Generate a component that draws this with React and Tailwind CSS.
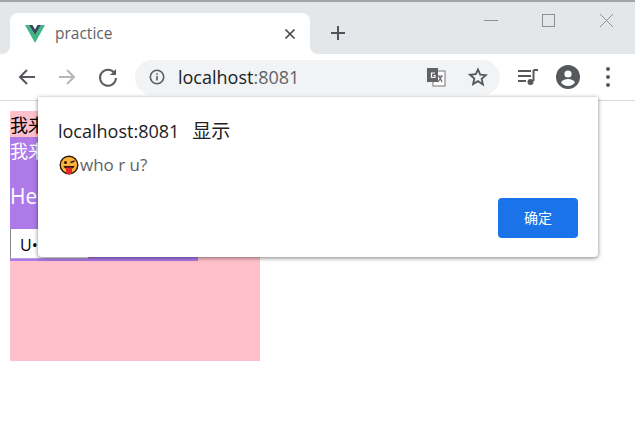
const font = { fontFamily: '"Open Sans", "Noto Sans CJK SC", sans-serif' };

const TabIcon = () => (
  <svg width="20" height="18" viewBox="0 0 20 18">
    <path d="M0 0h4l6 10 6-10h4L10 18z" fill="#41b883" />
    <path d="M4 0h3.5L10 4.5 12.5 0H16l-6 10z" fill="#35495e" />
  </svg>
);

const ToolIcon = ({ children, className = '' }) => (
  <svg width="24" height="24" viewBox="0 0 24 24" className={className} fill="none">
    {children}
  </svg>
);

const Translate = () => (
  <svg width="20" height="20" viewBox="0 0 20 20">
    <rect x="7" y="4" width="12" height="15" fill="#fff" stroke="#777" strokeWidth="1" />
    <path d="M10 9h7M13 9l3 6M16 9l-4 6" stroke="#666" strokeWidth="1.2" fill="none" />
    <rect x="1" y="1" width="11" height="14" fill="#5f6368" />
    <path d="M9 6H5.500v4.500H9V8.500H7.400" stroke="#fff" strokeWidth="1.2" fill="none" />
  </svg>
);

const Emoji = () => (
  <svg width="20" height="20" viewBox="0 0 20 20" className="shrink-0 ml-[1px] mr-[1px]">
    <circle cx="10" cy="10" r="8.8" fill="#fbb13a" stroke="#2c1a05" strokeWidth="1.4" />
    <circle cx="6.5" cy="7.5" r="1.5" fill="#2c1a05" />
    <path d="M11.5 7.5l4-1.5" stroke="#2c1a05" strokeWidth="1.5" />
    <path d="M4.5 11h11c-.5 2-2 3-5.500 3s-5-1-5.500-3z" fill="#2c1a05" />
    <path d="M7 12.5h6v4a3 3 0 0 1-6 0z" fill="#e5262a" />
  </svg>
);

const TabFlare = ({ flip }) => (
  <svg width="8" height="8" viewBox="0 0 8 8" className={flip ? 'absolute right-[-8px] bottom-0 -scale-x-100' : 'absolute left-[-8px] bottom-0'}>
    <path d="M8 0v8H0c4 0 8-3 8-8z" fill="#fff" />
  </svg>
);

export default function App() {
  return (
    <div className="relative w-[635px] h-[446px] overflow-hidden bg-white" style={font}>
      <div className="h-[54px] bg-[#e4e7ea] border-t-2 border-[#a3a5a6] flex items-end pl-2.5">
        <div className="relative w-[300px] h-[41px] bg-white rounded-t-lg flex items-center pl-[15px] pr-[14px]">
          <TabFlare />
          <TabFlare flip />
          <TabIcon />
          <span className="ml-[10px] text-[15.5px] text-[#5f6368]">practice</span>
          <svg width="12" height="12" viewBox="0 0 12 12" className="ml-auto">
            <path d="M1.5 1.5l9 9M10.5 1.5l-9 9" stroke="#45484c" strokeWidth="1.7" />
          </svg>
        </div>
        <svg width="16" height="16" viewBox="0 0 16 16" className="ml-[20px] mb-[13px]">
          <path d="M8 1v14M1 8h14" stroke="#50545a" strokeWidth="2" />
        </svg>
        <div className="ml-auto self-start flex items-center h-[36px] pr-[21px] gap-[44px]">
          <div className="w-[14px] h-px bg-[#8d9093]" />
          <div className="w-[13px] h-[13px] border border-[#8d9093]" />
          <svg width="15" height="15" viewBox="0 0 15 15">
            <path d="M1 1l13 13M14 1L1 14" stroke="#8d9093" strokeWidth="1" />
          </svg>
        </div>
      </div>

      <div className="h-[47px] bg-white border-b border-[#d9dadc] flex items-center pl-[15px]">
        <ToolIcon>
          <path d="M20 12H5M12 5l-7 7 7 7" stroke="#55585c" strokeWidth="2" />
        </ToolIcon>
        <ToolIcon className="ml-4">
          <path d="M4 12h15M12 5l7 7-7 7" stroke="#b4b6b8" strokeWidth="2" />
        </ToolIcon>
        <ToolIcon className="ml-[17px]">
          <path d="M18.5 8A8 8 0 1 0 20 13" stroke="#5a5d61" strokeWidth="2" />
          <path d="M20 4v6h-6z" fill="#5a5d61" />
        </ToolIcon>
        <div className="ml-[15px] w-[365px] h-[35px] rounded-full bg-[#f1f3f4] flex items-center pl-[14px] pr-[10px]">
          <svg width="16" height="16" viewBox="0 0 16 16">
            <circle cx="8" cy="8" r="6.7" fill="none" stroke="#5a5d61" strokeWidth="1.6" />
            <path d="M8 7v4.5M8 4.2v1.6" stroke="#5a5d61" strokeWidth="1.6" />
          </svg>
          <span className="ml-[13px] text-[18px] text-[#202124]">
            localhost<span className="text-[#5f6368]">:8081</span>
          </span>
          <span className="ml-auto flex -translate-x-[2px]"><Translate /></span>
          <svg width="20" height="20" viewBox="0 0 24 24" className="ml-[20px] mr-[2px]">
            <path d="M12 3l2.700 6.200 6.800.6-5.100 4.500 1.500 6.700L12 17l-5.900 3.500 1.500-6.700-5.100-4.500 6.800-.6z" fill="none" stroke="#55585c" strokeWidth="2.2" />
          </svg>
        </div>
        <svg width="22" height="20" viewBox="0 0 22 20" className="ml-[17px]">
          <path d="M1 4h13M1 9h13M1 14h8" stroke="#55585c" strokeWidth="2" />
          <path d="M16.5 3H21M16.5 3v11" stroke="#55585c" strokeWidth="2" />
          <circle cx="13.5" cy="15" r="3" fill="#55585c" />
        </svg>
        <svg width="24" height="24" viewBox="0 0 24 24" className="ml-[17px]">
          <circle cx="12" cy="12" r="12" fill="#55585c" />
          <circle cx="12" cy="9" r="3.6" fill="#fff" />
          <path d="M5 17.500c1.500-2.600 4.500-3.500 7-3.500s5.500.9 7 3.500c-1.500 2-4 3.500-7 3.500s-5.500-1.500-7-3.500z" fill="#fff" />
        </svg>
        <div className="ml-[26px] flex flex-col gap-[4px]">
          <div className="w-[4px] h-[4px] rounded-full bg-[#55585c]" />
          <div className="w-[4px] h-[4px] rounded-full bg-[#55585c]" />
          <div className="w-[4px] h-[4px] rounded-full bg-[#55585c]" />
        </div>
      </div>

      <div className="pt-[10px] pl-2.5">
        <div className="w-[250px] h-[250px] bg-[#ffc0cb] text-[18px] text-black">
          <div className="h-[26px] leading-[28px]">我来</div>
          <div className="w-[188px] h-[124px] bg-[#ad7ae8] text-white">
            <div className="h-[28px] leading-[28px]">我来</div>
            <div className="h-[64px] flex items-center text-[21px]">Hello</div>
            <div className="w-[78px] h-[30px] bg-white border-l border-b border-l-[#8a8a8a] border-b-[#b0a0e0] text-black text-[16px] pl-[9px] leading-[32px]">
              U•
            </div>
          </div>
        </div>
      </div>

      <div className="absolute left-[38px] top-[97px] w-[560px] h-[160px] bg-white rounded-b-sm shadow-[0_1px_4px_rgba(0,0,0,0.5)] pl-[20px] pr-[20px] pt-[21px]">
        <div className="flex items-center h-[26px] text-[18px] text-[#202124]">
          <span>localhost:8081</span>
          <span className="ml-[13px] text-[19px]">显示</span>
        </div>
        <div className="mt-[11px] flex items-center h-[20px] text-[17px] text-[#5f6368]">
          <Emoji />
          <span>who r u?</span>
        </div>
        <div className="mt-[23px] flex justify-end">
          <button className="w-[80px] h-[40px] rounded bg-[#1a73e8] text-white text-sm">确定</button>
        </div>
      </div>
    </div>
  );
}
